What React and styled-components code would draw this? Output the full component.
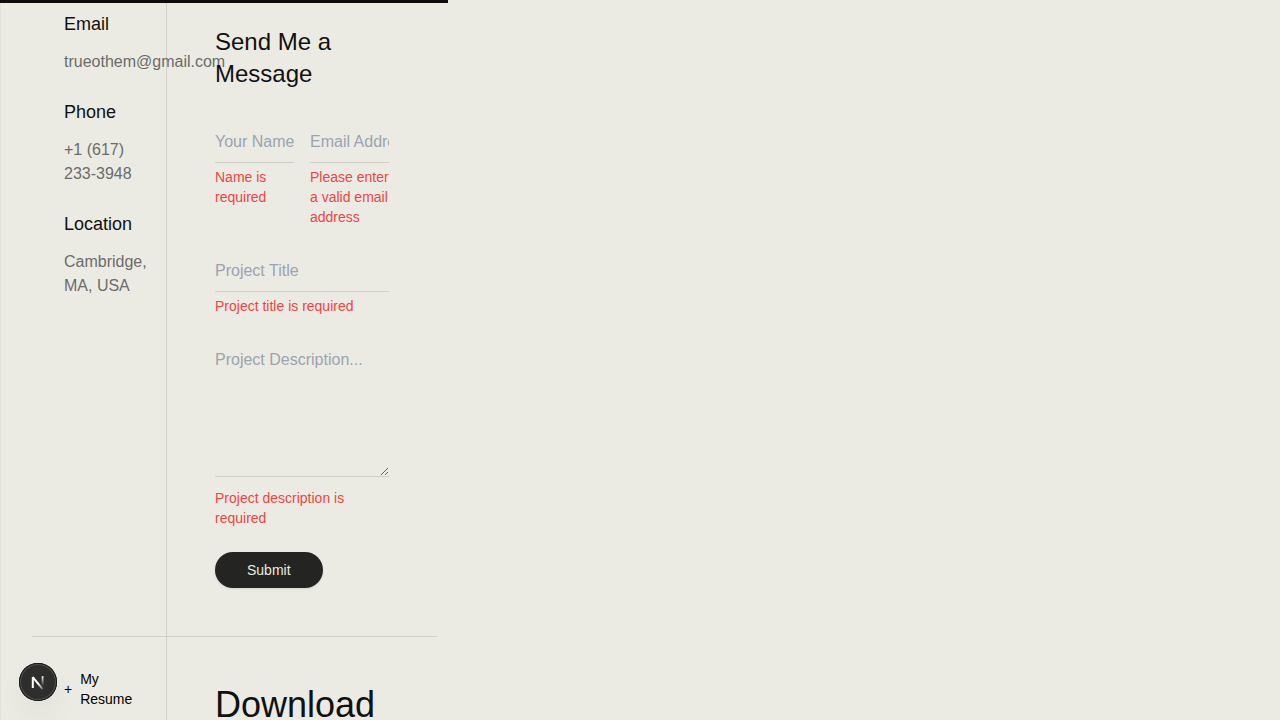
import React from "react";
import styled, { createGlobalStyle } from "styled-components";

const GlobalStyle = createGlobalStyle`
  *, *::before, *::after { box-sizing: border-box; }
  body {
    margin: 0;
    background: #ebebe3;
    color: #111111;
    font-family: "Liberation Sans", Helvetica, Arial, sans-serif;
    font-size: 16px;
    line-height: 24px;
  }
  h2, h3, h4, p { margin: 0; font-weight: 400; }
`;

const ScrollProgress = styled.div`
  position: fixed;
  top: 0;
  left: 0;
  width: 35%;
  height: 3px;
  background: #120b0d;
  z-index: 10;
`;

const Page = styled.main`
  min-height: 100vh;
  padding: 0 31px;
  border-left: 1px solid #e2e2da;
`;

const Content = styled.div`
  max-width: 405px;
`;

const Row = styled.section`
  display: grid;
  grid-template-columns: minmax(0, 1fr) minmax(0, 2fr);
  border-bottom: 1px solid #d0d0c8;
`;

const Aside = styled.div`
  padding: ${(p) => p.$top}px 32px 32px;
  border-right: 1px solid #d0d0c8;
`;

const Main = styled.div`
  padding: ${(p) => p.$top}px 48px 48px;
`;

const ContactList = styled.div`
  display: flex;
  flex-direction: column;
  gap: 24px;
`;

const ContactTitle = styled.h4`
  margin-bottom: 12px;
  font-size: 18px;
  line-height: 28px;
`;

const ContactText = styled.p`
  color: #6b6b6b;
`;

const FormTitle = styled.h3`
  margin-bottom: 32px;
  font-size: 24px;
  line-height: 32px;
`;

const Form = styled.form`
  display: flex;
  flex-direction: column;
  align-items: stretch;
  gap: 24px;
`;

const FieldPair = styled.div`
  display: grid;
  grid-template-columns: repeat(2, minmax(0, 1fr));
  gap: 16px;
`;

const Field = styled.div`
  display: flex;
  flex-direction: column;
  gap: ${(p) => p.$gap || 4}px;
`;

const Input = styled.input`
  display: block;
  width: 100%;
  height: 41px;
  padding: 8px 0;
  border: 0;
  border-bottom: 1px solid #d0d0c8;
  border-radius: 0;
  outline: none;
  background: transparent;
  color: #111111;
  font: inherit;
  &::placeholder { color: #9ca3af; opacity: 1; }
`;

const TextArea = styled(Input).attrs({ as: "textarea" })`
  height: auto;
  resize: vertical;
`;

const ErrorText = styled.p`
  color: #ef4444;
  font-size: 14px;
  line-height: 20px;
`;

const SubmitButton = styled.button`
  align-self: flex-start;
  height: 36px;
  padding: 0 32px;
  border: 0;
  border-radius: 18px;
  background: #242422;
  color: #ebebe3;
  font: inherit;
  font-size: 14px;
  line-height: 20px;
  box-shadow: 0 1px 2px rgba(0, 0, 0, 0.1);
  cursor: pointer;
`;

const SectionLabel = styled.div`
  display: flex;
  align-items: center;
  gap: 8px;
  color: #000000;
  font-size: 14px;
  line-height: 20px;
`;

const SectionTitle = styled.h2`
  font-size: 36px;
  line-height: 40px;
`;

const DevButton = styled.button`
  position: fixed;
  left: 19px;
  bottom: 19px;
  width: 38px;
  height: 38px;
  padding: 0;
  border: 0;
  border-radius: 50%;
  background: #2e2e2d;
  box-shadow: inset 0 0 0 1px #171717, inset 0 0 0 2px #505050,
    0 16px 32px -8px rgba(0, 0, 0, 0.12);
  cursor: pointer;
  svg { display: block; }
`;

const contacts = [
  { title: "Email", text: "trueothem@gmail.com" },
  { title: "Phone", text: "+1 (617) 233-3948" },
  { title: "Location", text: "Cambridge, MA, USA" },
];

function NextMark() {
  return (
    <svg width="38" height="38" viewBox="0 0 38 38" fill="none" aria-hidden="true">
      <defs>
        <linearGradient id="diagonal" x1="20" y1="20" x2="24.5" y2="26" gradientUnits="userSpaceOnUse">
          <stop stopColor="#fff" />
          <stop offset="1" stopColor="#fff" stopOpacity="0.25" />
        </linearGradient>
        <linearGradient id="stem" x1="24" y1="13" x2="24" y2="23" gradientUnits="userSpaceOnUse">
          <stop stopColor="#fff" />
          <stop offset="1" stopColor="#fff" stopOpacity="0" />
        </linearGradient>
      </defs>
      <path d="M13.8 25V14.2L23.6 26.2" stroke="url(#diagonal)" strokeWidth="2" strokeLinejoin="bevel" />
      <path d="M23.6 13.2v10" stroke="url(#stem)" strokeWidth="1.8" />
    </svg>
  );
}

export default function App() {
  return (
    <>
      <GlobalStyle />
      <ScrollProgress />
      <Page>
        <Content>
          <Row>
            <Aside $top={10}>
              <ContactList>
                {contacts.map((c) => (
                  <div key={c.title}>
                    <ContactTitle>{c.title}</ContactTitle>
                    <ContactText>{c.text}</ContactText>
                  </div>
                ))}
              </ContactList>
            </Aside>
            <Main $top={26}>
              <FormTitle>Send Me a Message</FormTitle>
              <Form noValidate onSubmit={(e) => e.preventDefault()}>
                <FieldPair>
                  <Field>
                    <Input aria-label="Your Name" aria-describedby="name-error" placeholder="Your Name" />
                    <ErrorText id="name-error">Name is required</ErrorText>
                  </Field>
                  <Field>
                    <Input type="email" aria-label="Email Address" aria-describedby="email-error" placeholder="Email Address" />
                    <ErrorText id="email-error">Please enter a valid email address</ErrorText>
                  </Field>
                </FieldPair>
                <Field>
                  <Input aria-label="Project Title" aria-describedby="title-error" placeholder="Project Title" />
                  <ErrorText id="title-error">Project title is required</ErrorText>
                </Field>
                <Field $gap={11}>
                  <TextArea rows={5} aria-label="Project Description" aria-describedby="description-error" placeholder="Project Description..." />
                  <ErrorText id="description-error">Project description is required</ErrorText>
                </Field>
                <SubmitButton type="submit">Submit</SubmitButton>
              </Form>
            </Main>
          </Row>
          <Row>
            <Aside $top={32}>
              <SectionLabel>
                <span>+</span>
                <span>My Resume</span>
              </SectionLabel>
            </Aside>
            <Main $top={48}>
              <SectionTitle>Download</SectionTitle>
            </Main>
          </Row>
        </Content>
      </Page>
      <DevButton type="button" aria-label="Open Next.js Dev Tools">
        <NextMark />
      </DevButton>
    </>
  );
}
